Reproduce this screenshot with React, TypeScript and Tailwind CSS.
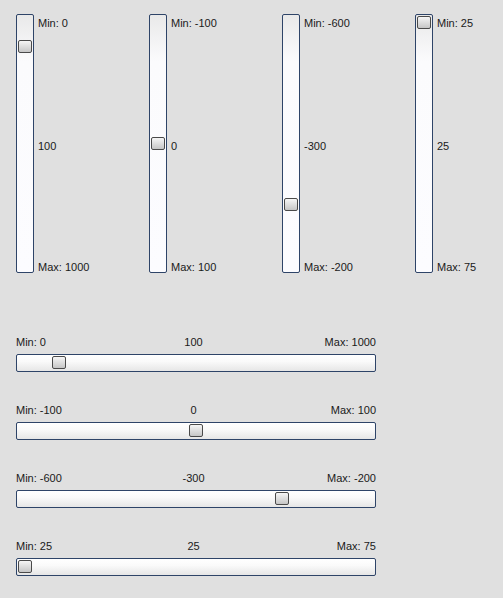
import React from 'react';

interface SliderSpec {
  min: number;
  max: number;
  value: number;
}

const SLIDERS: SliderSpec[] = [
  { min: 0, max: 1000, value: 100 },
  { min: -100, max: 100, value: 0 },
  { min: -600, max: -200, value: -300 },
  { min: 25, max: 75, value: 25 },
];

const frac = (s: SliderSpec) => (s.value - s.min) / (s.max - s.min);

function Handle({ style }: { style: React.CSSProperties }) {
  return (
    <div
      className="absolute h-[13px] w-[14px] rounded-[2px] border border-[#4a4a4a] bg-[linear-gradient(to_bottom,#f6f6f6,#c6c6c6)]"
      style={style}
    />
  );
}

function VerticalSlider({ spec }: { spec: SliderSpec }) {
  // inner height 257, handle 13 + gaps
  const top = 1 + Math.round(frac(spec) * 242);
  return (
    <div className="flex">
      <div className="relative h-[259px] w-[18px] shrink-0 rounded-[2px] border border-[#2e4468] bg-[linear-gradient(to_bottom,#e9e9e9,#fbfbfd_18%,#fcfcff)]">
        <Handle style={{ top, left: 1 }} />
      </div>
      <div className="ml-[4px] flex h-[260px] flex-col justify-between whitespace-nowrap pt-[3px]">
        <span>Min: {spec.min}</span>
        <span className="mt-[1px]">{spec.value}</span>
        <span>Max: {spec.max}</span>
      </div>
    </div>
  );
}

function HorizontalSlider({ spec }: { spec: SliderSpec }) {
  const left = 1 + Math.round(frac(spec) * 342);
  return (
    <div className="flex w-[360px] flex-col gap-[5px]">
      <div className="grid grid-cols-3">
        <span>Min: {spec.min}</span>
        <span className="pr-[5px] text-center">{spec.value}</span>
        <span className="text-right">Max: {spec.max}</span>
      </div>
      <div className="relative h-[18px] w-[360px] rounded-[2px] border border-[#2e4468] bg-[linear-gradient(to_bottom,#ffffff,#fafafa_40%,#e6e6e6)]">
        <Handle style={{ top: 1, left }} />
      </div>
    </div>
  );
}

export default function App() {
  return (
    <div
      className="h-[598px] w-[503px] overflow-hidden bg-[#e0e0e0] pl-[16px] pt-[14px] text-[11px] leading-[13px] text-[#1a1a1a]"
      style={{ fontFamily: '"Liberation Sans", Arial, sans-serif' }}
    >
      <div className="grid h-[259px] grid-cols-[133px_133px_133px_auto]">
        {SLIDERS.map((s, i) => (
          <VerticalSlider key={i} spec={s} />
        ))}
      </div>
      <div className="mt-[63px] flex flex-col gap-[32px]">
        {SLIDERS.map((s, i) => (
          <HorizontalSlider key={i} spec={s} />
        ))}
      </div>
    </div>
  );
}
